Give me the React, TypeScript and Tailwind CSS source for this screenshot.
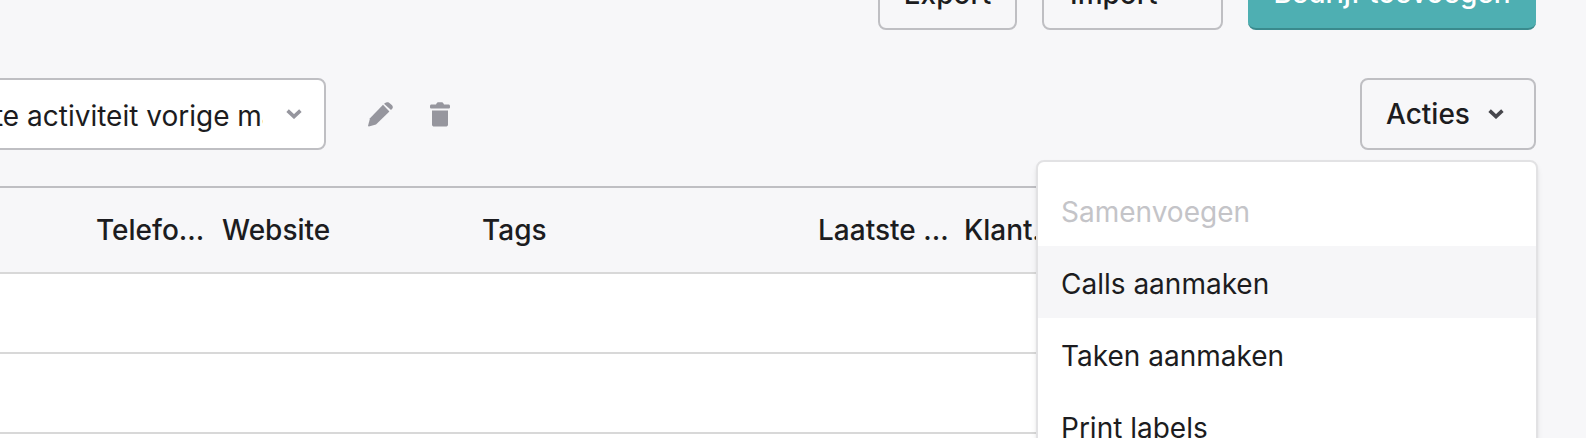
import React from 'react';

const Chevron = ({ className }: { className: string }) => (
  <svg viewBox="0 0 16 10" className={className} fill="none" stroke="currentColor" strokeWidth="3.6">
    <path d="M1.6 1.6 8 7.6 14.4 1.6" />
  </svg>
);

const PencilIcon = () => (
  <svg viewBox="0 0 25 25" className="ml-[42px] h-[25px] w-[25px] text-[#96969e]" fill="currentColor">
    <path d="M15 2.8 21.4 9.4 8 22.4 0.8 24.6 0 24 2 16.2Z" />
    <path d="M16.8 1.2C18 0.2 19.5 0 20.8 0.6L23.8 3C25 4.2 25.2 5.6 24.2 6.8L23 8 16 1.8Z" />
  </svg>
);

const TrashIcon = () => (
  <svg viewBox="0 0 20 25" className="ml-[37px] h-[25px] w-[20px] text-[#96969e]" fill="currentColor">
    <path d="M6.5 1.5C7 0.6 7.6 0.2 8.5 0.2H11.5C12.4 0.2 13 0.6 13.5 1.5L14 2.5H18.5C19.4 2.5 20 3.2 20 4V5.2C20 6 19.4 6.6 18.5 6.6H1.5C0.6 6.6 0 6 0 5.2V4C0 3.2 0.6 2.5 1.5 2.5H6Z" />
    <path d="M2 8.4H18V22.4C18 23.8 17 24.6 15.8 24.6H4.2C3 24.6 2 23.8 2 22.4Z" />
  </svg>
);

const columns = [
  { label: 'Telefoon', className: 'w-[126px] pr-[14px]' },
  { label: 'Website', className: 'w-[260px]' },
  { label: 'Tags', className: 'w-[336px]' },
  { label: 'Laatste activiteit', className: 'w-[146px] pr-[14px]' },
  { label: 'Klantstatus', className: 'w-[96px]' },
];

const App = () => {
  return (
    <div className="h-[438px] w-full overflow-hidden bg-[#f7f7f9] pr-[50px] font-['Inter',sans-serif] text-[28px] text-[#1c1c20]">
      <div className="-mt-[42px] flex justify-end gap-[25px]">
        <button className="h-[72px] w-[139px] rounded-lg border-2 border-[#bfbfc3] font-[450]">Export</button>
        <button className="flex h-[72px] w-[181px] items-center gap-[18px] rounded-lg border-2 border-[#bfbfc3] pl-[26px] font-[450]">
          Import
          <Chevron className="h-[10px] w-[16px] text-[#47474d]" />
        </button>
        <button className="h-[72px] w-[288px] rounded-lg border-b-2 border-[#3a8a8d] bg-[#4eafb2] font-[450] text-white">Bedrijf toevoegen</button>
      </div>

      <div className="mt-[48px] flex h-[72px] items-center justify-between">
        <div className="flex items-center">
          <div className="-ml-[101px] flex h-[72px] w-[427px] items-center rounded-lg border-2 border-[#bfbfc3] bg-white pl-[22px]">
            <span className="w-[340px] shrink-0 overflow-hidden whitespace-nowrap pt-[3px]">Laatste activiteit vorige maand</span>
            <Chevron className="ml-[23px] h-[10px] w-[16px] shrink-0 text-[#96969e]" />
          </div>
          <PencilIcon />
          <TrashIcon />
        </div>

        <div className="relative">
          <button className="flex h-[72px] w-[176px] items-center gap-[18px] rounded-lg border-2 border-[#bfbfc3] pl-[24px] font-[450]">
            Acties
            <Chevron className="h-[10px] w-[16px] text-[#47474d]" />
          </button>
          <div className="absolute top-[82px] -right-[2px] z-10 w-[502px] rounded-lg border-2 border-[#e2e2e4] bg-white py-[12px] shadow-md">
            <div className="flex h-[72px] items-center px-[23px] pt-[3px] text-[#c4c4c8]">Samenvoegen</div>
            <div className="flex h-[72px] items-center bg-[#f6f6f8] px-[23px] pt-[3px]">Calls aanmaken</div>
            <div className="flex h-[72px] items-center px-[23px] pt-[3px]">Taken aanmaken</div>
            <div className="flex h-[72px] items-center px-[23px] pt-[3px]">Print labels</div>
          </div>
        </div>
      </div>

      <div className="mt-[36px] border-t-2 border-[#bfbfc3]">
        <div className="flex h-[86px] items-center border-b-2 border-[#d8d8d8] pl-[96px] font-[450]">
          {columns.map((column) => (
            <div key={column.label} className={column.className}>
              <div className="truncate">{column.label}</div>
            </div>
          ))}
        </div>
        <div className="h-[80px] border-b-2 border-[#d8d8d8] bg-white" />
        <div className="h-[80px] border-b-2 border-[#d8d8d8] bg-white" />
        <div className="h-[10px] bg-white" />
      </div>
    </div>
  );
};

export default App;
